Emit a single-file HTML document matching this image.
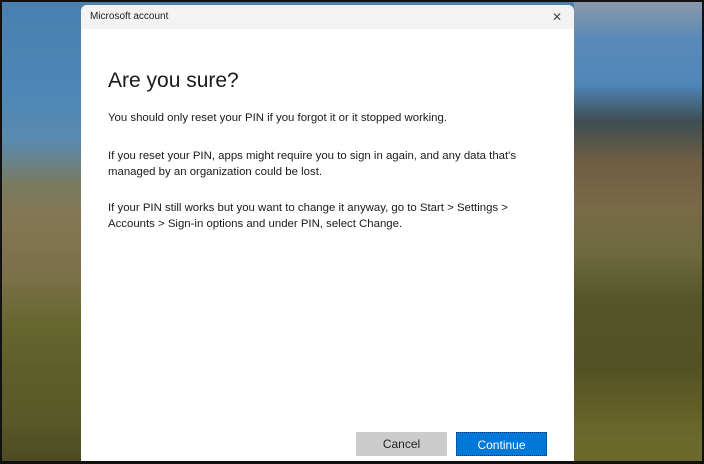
<!DOCTYPE html>
<html><head><style>
html,body{margin:0;padding:0}
body{width:704px;height:464px;position:relative;overflow:hidden;background:#111;font-family:"Liberation Sans",sans-serif}
.bg{position:absolute;left:2px;top:2px;width:700px;height:459px;
background:linear-gradient(180deg,#4a7fae 0%,#4d87b6 20%,#5a8ab0 30%,#7a7a5e 40%,#857654 48%,#7a7048 60%,#676730 70%,#5e5e2a 80%,#5a5a28 90%,#4d4a22 100%)}
.bgr{position:absolute;left:574px;top:2px;width:128px;height:459px;
background:linear-gradient(180deg,#8a98a8 0%,#5a8ab8 8%,#4f86b8 18%,#3f4e52 26%,#6f5e44 35%,#7a6a48 45%,#6c6a3e 55%,#55552a 65%,#535224 80%,#6b6a2c 95%)}
.win{position:absolute;left:81px;top:5px;width:493px;height:456px;background:#fff;border-radius:6px 6px 0 0;overflow:hidden}
.tb{height:24px;background:#f3f3f3;font-size:10px;color:#222;line-height:24px;padding-left:9px;position:relative}
.x{position:absolute;right:12px;top:0;font-size:12px;color:#444}
h1{position:absolute;left:27px;top:64px;margin:0;font-weight:normal;font-size:21px;color:#1a1a1a}
p{position:absolute;left:27px;margin:0;font-size:11.4px;line-height:16px;color:#1a1a1a;white-space:nowrap}
.btn{position:absolute;top:427px;width:91px;height:24px;font-size:12px;text-align:center;line-height:24px;box-sizing:border-box}
</style></head><body>
<div class="bg"></div><div class="bgr"></div>
<div class="win">
<div class="tb">Microsoft account<span class="x">✕</span></div>
<h1>Are you sure?</h1>
<p style="top:105px">You should only reset your PIN if you forgot it or it stopped working.</p>
<p style="top:143px">If you reset your PIN, apps might require you to sign in again, and any data that's<br>managed by an organization could be lost.</p>
<p style="top:195px">If your PIN still works but you want to change it anyway, go to Start &gt; Settings &gt;<br>Accounts &gt; Sign-in options and under PIN, select Change.</p>
<div class="btn" style="left:275px;background:#cccccc;color:#222">Cancel</div>
<div class="btn" style="left:375px;background:#0078d7;color:#fff;border:1px dotted #003a70">Continue</div>
</div>
</body></html>
